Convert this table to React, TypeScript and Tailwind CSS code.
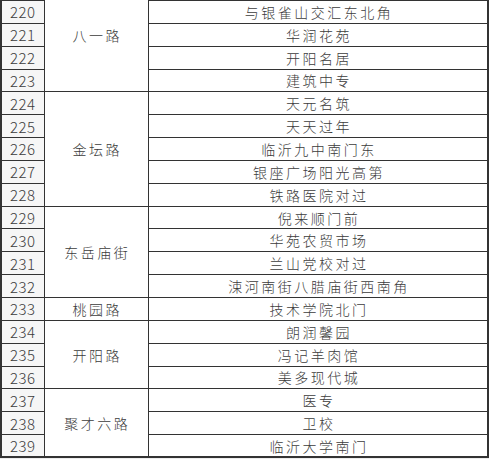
import React from "react";

type Row = { n: number; loc: string; road?: string; span?: number; first?: boolean };

const rows: Row[] = [
  { n: 220, loc: "与银雀山交汇东北角", road: "八一路", span: 4, first: true },
  { n: 221, loc: "华润花苑" },
  { n: 222, loc: "开阳名居" },
  { n: 223, loc: "建筑中专" },
  { n: 224, loc: "天元名筑", road: "金坛路", span: 5 },
  { n: 225, loc: "天天过年" },
  { n: 226, loc: "临沂九中南门东" },
  { n: 227, loc: "银座广场阳光高第" },
  { n: 228, loc: "铁路医院对过" },
  { n: 229, loc: "倪来顺门前", road: "东岳庙街", span: 4 },
  { n: 230, loc: "华苑农贸市场" },
  { n: 231, loc: "兰山党校对过" },
  { n: 232, loc: "涑河南街八腊庙街西南角" },
  { n: 233, loc: "技术学院北门", road: "桃园路", span: 1 },
  { n: 234, loc: "朗润馨园", road: "开阳路", span: 3 },
  { n: 235, loc: "冯记羊肉馆" },
  { n: 236, loc: "美多现代城" },
  { n: 237, loc: "医专", road: "聚才六路", span: 3 },
  { n: 238, loc: "卫校" },
  { n: 239, loc: "临沂大学南门" },
];

const cjk = { fontFamily: '"Noto Sans CJK SC", "Noto Sans", sans-serif' };

export default function App() {
  return (
    <div className="w-[489px] h-[459px] overflow-hidden bg-[#ececec]">
      <table
        className="w-[487px] table-fixed border-collapse bg-white text-[#3c3c3c] border-l-2 border-b-2 border-r-2 border-[#333]"
        style={cjk}
      >
        <colgroup>
          <col className="w-[43px]" />
          <col className="w-[104px]" />
          <col className="w-[340px]" />
        </colgroup>
        <tbody>
          {rows.map((r) => (
            <tr key={r.n} className="h-[22.85px]">
              <td className="border border-[#333] bg-[#f6f6f6] p-0 text-center text-[15px] leading-none font-light tracking-[0.5px]">
                {r.n}
              </td>
              {r.road && (
                <td
                  rowSpan={r.span}
                  className={
                    r.first
                      ? "border border-t-0 border-[#333] p-0 pb-[22px] pl-[2.5px] text-center text-[14px] leading-none font-light tracking-[2.5px]"
                      : "border border-[#333] p-0 pl-[2.5px] text-center text-[14px] leading-none font-light tracking-[2.5px]"
                  }
                >
                  {r.road}
                </td>
              )}
              <td className="border border-[#333] p-0 pl-[2.5px] text-center text-[14px] leading-none font-light tracking-[2.5px] whitespace-nowrap">
                {r.loc}
              </td>
            </tr>
          ))}
        </tbody>
      </table>
    </div>
  );
}
